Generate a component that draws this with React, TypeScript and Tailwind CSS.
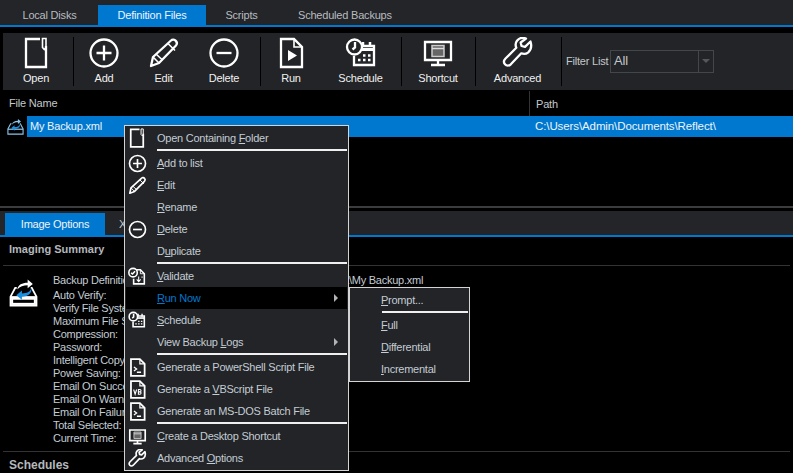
import type { ReactNode } from "react";

const FONT = "font-['Liberation_Sans',Arial,sans-serif]";

type IconProps = { size?: number };

function Svg({ size = 32, children }: IconProps & { children: ReactNode }) {
  return (
    <svg width={size} height={size} viewBox="0 0 32 32" fill="none" stroke="#fff" strokeWidth={size < 24 ? 2.8 : 2.3} className="block shrink-0">
      {children}
    </svg>
  );
}

const OpenIcon = (p: IconProps) => (
  <Svg {...p}>
    <path d="M20 2H6v28h20V9" />
    <path d="M22.500 1.500h3.500v9l-1.700 2-1.800-2z" strokeWidth="1.600" />
  </Svg>
);
const AddIcon = (p: IconProps) => (
  <Svg {...p}>
    <circle cx="16" cy="16" r="13.500" />
    <path d="M16 8.500v15M8.500 16h15" />
  </Svg>
);
const MinusIcon = (p: IconProps) => (
  <Svg {...p}>
    <circle cx="16" cy="16" r="13.500" />
    <path d="M8.500 16h15" />
  </Svg>
);
const PencilIcon = (p: IconProps) => (
  <Svg {...p}>
    <path d="M23 3.500c1.500-1.500 3.500-1 4.800.4 1.300 1.400 1.600 3 .2 4.600L11 26l-8 3 2-9z" strokeLinejoin="round" />
    <path d="M20 6.500l7 7M5 20l6 6M8 17l6.500 6" strokeWidth="1.600" />
  </Svg>
);
const RunIcon = (p: IconProps) => (
  <Svg {...p}>
    <path d="M6 2h13l8 8v20H6z" />
    <path d="M19 2v8h8" strokeWidth="1.600" />
    <path d="M13 13l9 5.500-9 5.500z" fill="#fff" stroke="none" />
  </Svg>
);
const ScheduleIcon = (p: IconProps) => (
  <Svg {...p}>
    <path d="M14 9h15v19H9v-9" />
    <path d="M18 5v5M25 5v5" strokeWidth="2.500" />
    <path d="M15 12.500h14" strokeWidth="3" />
    <path d="M13 23h2.500M18 23h2.500M23 23h2.500M18 18.500h2.500M23 18.500h2.500" strokeWidth="2.400" />
    <circle cx="9.500" cy="10" r="7.500" fill="#222427" />
    <path d="M10 5v5.500l-2.500 2" />
  </Svg>
);
const ShortcutIcon = (p: IconProps) => (
  <Svg {...p}>
    <path d="M3 5h26v18H3z" />
    <path d="M10 8.500h12v11H10z" fill="#666" stroke="#ccc" strokeWidth="1.500" />
    <path d="M10 11.500h12" stroke="#ddd" strokeWidth="1.500" />
    <path d="M16 23v4M9 28h14" />
  </Svg>
);
const WrenchIcon = (p: IconProps) => (
  <Svg {...p}>
    <path
      d="M28.500 4.500l-5.500 5.300-3.500-.8-.8-3.500 5.300-4c-3.500-1.200-7-.4-9 2.300-1.500 2-1.700 4.700-.7 7L3.500 21.500c-1.700 1.800-1.900 4.200-.5 5.800 1.500 1.700 4 1.700 5.800 0l10.500-11c2.400 1 5 .6 7-1 2.700-2.300 3.400-6.800 2.200-10.800z"
      strokeLinejoin="round"
    />
  </Svg>
);
const ValidateIcon = (p: IconProps) => (
  <Svg {...p}>
    <path d="M13 5h9l7 7v18H10v-9" />
    <path d="M22 5v7h7" strokeWidth="1.600" />
    <path d="M19 17v9M15.500 22l3.500 4 3.500-4M24 18h2" strokeWidth="1.800" />
    <circle cx="9" cy="10" r="7.500" fill="#222427" />
    <path d="M5.500 10.500l2.500 2 4.500-5" />
  </Svg>
);
const ScriptIcon = ({ size, glyph }: IconProps & { glyph: "ps" | "vb" }) => (
  <Svg size={size}>
    <path d="M5 2h15l8 8v20H5z" strokeWidth="3" />
    <path d="M20 2v8h8" strokeWidth="2" />
    {glyph === "ps" ? (
      <path d="M10 15l4.500 3.500L10 22M15 24h7" strokeWidth="2.200" />
    ) : (
      <path d="M9.500 16l2.500 8 2.500-8M17.500 16v8h2.500a2 2 0 0 0 0-4h-2.500 2.500a2 2 0 0 0 0-4z" strokeWidth="1.800" />
    )}
  </Svg>
);
// tray with the two swoosh arrows, solid lower band in the summary version
const BackupIcon = ({ size = 28, tray = "#fff", solid = true }: IconProps & { tray?: string; solid?: boolean }) => (
  <svg width={size} height={size} viewBox="0 0 28 28" fill="none" className="block shrink-0">
    <path d="M7.500 9.500H6L1.500 18v8.500h25V18L22 9.500h-1" stroke={tray} strokeWidth="1.800" />
    <path d="M1.500 18.500h25" stroke={tray} strokeWidth="2" />
    {solid && <path d="M2 19h24v7H2z" fill={tray} />}
    {solid && <path d="M4 21h20v3H4z" fill="#000" />}
    <path d="M8 11c.8-4.500 4.500-6.500 10-6.500V1.500l5 4.300-5 4.200V7c-4 0-7.500 1-10 4z" fill={tray} />
    <path d="M21.500 9.500c-.5 3.800-4 5.500-9 5.500v-3l-5.500 4.600 5.500 4.400v-3c6 0 10-3.300 9-8.500z" fill="#1a8fe0" />
  </svg>
);

function ToolButton({ icon, label, w }: { icon: ReactNode; label: string; w: string }) {
  return (
    <div className={`${w} flex flex-col items-center pt-[4px] text-[11px] leading-[16px] tracking-[-0.2px] text-[#f0f0f0]`}>
      <div className="flex h-[32px] items-center justify-center">{icon}</div>
      <span className="mt-[1px]">{label}</span>
    </div>
  );
}

const Sep = () => <div className="my-[4px] w-px shrink-0 self-stretch bg-black" />;

function Toolbar() {
  return (
    <div className="ml-[3px] mt-[6px] flex h-[57px] bg-[#222427]">
      <ToolButton w="w-[70px] pr-[4px]" label="Open" icon={<OpenIcon />} />
      <Sep />
      <ToolButton w="w-[60px]" label="Add" icon={<AddIcon />} />
      <ToolButton w="w-[59px]" label="Edit" icon={<PencilIcon />} />
      <ToolButton w="w-[62px]" label="Delete" icon={<MinusIcon />} />
      <div className="w-[5px]" />
      <Sep />
      <ToolButton w="w-[60px]" label="Run" icon={<RunIcon />} />
      <ToolButton w="w-[79px]" label="Schedule" icon={<ScheduleIcon />} />
      <div className="w-px" />
      <Sep />
      <ToolButton w="w-[72px]" label="Shortcut" icon={<ShortcutIcon />} />
      <div className="w-px" />
      <Sep />
      <ToolButton w="w-[85px] pr-[2px]" label="Advanced" icon={<WrenchIcon />} />
      <Sep />
      <div className="ml-[4px] flex items-center pb-[1px] text-[11px] tracking-[-0.2px] text-[#c4c8cc]">
        <span className="w-[44px] whitespace-nowrap">Filter List</span>
        <div className="flex h-[23px] w-[104px] border border-[#44474a] text-[#c4c8cc]">
          <span className="flex-1 pl-[3px] text-[13px] leading-[20px]">All</span>
          <div className="flex w-[15px] items-center justify-center border-l border-[#44474a]">
            <div className="h-0 w-0 border-x-[4px] border-t-[4px] border-x-transparent border-t-[#55585b]" />
          </div>
        </div>
      </div>
    </div>
  );
}

function FileList() {
  return (
    <div className="h-[116px] bg-black text-[11px] tracking-[-0.2px]">
      <div className="flex h-[26px] items-center text-[#c4c8cc]">
        <span className="w-[529px] pl-[9px] pt-[1px]">File Name</span>
        <span className="border-l border-[#333] pl-[6px] pt-[1px] leading-[24px]">Path</span>
      </div>
      <div className="flex h-[21px] items-center">
        <div className="flex w-[27px] justify-center pl-[4px]">
          <BackupIcon size={17} tray="#8cc4ea" solid={false} />
        </div>
        <div className="flex h-full flex-1 items-center bg-[#0078cf] text-[#eef4fa]">
          <span className="w-[508px] pl-[3px]">My Backup.xml</span>
          <span className="text-[11.5px] tracking-[-0.1px]">C:\Users\Admin\Documents\Reflect\</span>
        </div>
      </div>
    </div>
  );
}

const SUMMARY = [
  "Auto Verify:",
  "Verify File System:",
  "Maximum File Size:",
  "Compression:",
  "Password:",
  "Intelligent Copy:",
  "Power Saving:",
  "Email On Success:",
  "Email On Warning:",
  "Email On Failure:",
  "Total Selected:",
  "Current Time:",
];

function LowerPanel() {
  return (
    <div className="flex-1 overflow-hidden bg-black text-[11px] tracking-[-0.25px] text-[#c4ccd4]">
      <div className="h-[2px] bg-[#3a3c3e]" />
      <div className="mt-[3px] h-[26px] border-b-[2px] border-[#0078cf] bg-[#232528] pt-[2px]">
        <div className="flex items-center">
          <div className="ml-[5px] flex h-[22px] w-[100px] items-center justify-center bg-[#0078cf] text-[#eef4fa]">Image Options</div>
          <span className="ml-[14px]">X</span>
        </div>
      </div>
      <div className="mx-[3px] h-[29px] border-b border-[#333] pl-[6px] pt-[4px] font-bold tracking-normal text-[#b4b8bc]">Imaging Summary</div>
      <div className="mx-[3px] flex h-[186px] border-b border-[#333] pl-[6px] pt-[8px]">
        <div className="w-[44px] pt-[4px]">
          <BackupIcon size={29} />
        </div>
        <div className="leading-[13px]">
          <div className="mb-[2px] flex whitespace-nowrap">
            <span className="w-[131px]">Backup Definition File:</span>
            <span>C:\Users\Admin\Documents\Reflect\My Backup.xml</span>
          </div>
          {SUMMARY.map((s) => (
            <div key={s}>{s}</div>
          ))}
        </div>
      </div>
      <div className="pl-[9px] pt-[6px] text-[12px] font-bold leading-[14px] tracking-normal text-[#b4b8bc]">Schedules</div>
    </div>
  );
}

function MenuItem({ icon, children, active, arrow }: { icon?: ReactNode; children: ReactNode; active?: boolean; arrow?: boolean }) {
  return (
    <div className={`flex h-[22px] items-center whitespace-nowrap ${active ? "bg-black text-[#0078cf]" : "text-[#c4ccd4]"}`}>
      <div className="mr-[9px] flex w-[22px] justify-center">{icon}</div>
      <span className="flex-1 pt-[1px]">{children}</span>
      {arrow && <div className="mr-[9px] h-0 w-0 border-y-[4px] border-l-[4px] border-y-transparent border-l-[#b0b4b8]" />}
    </div>
  );
}

const MenuSep = () => <div className="ml-[31px] h-[3px] border-t-2 border-[#f0f0f0]" />;

function ContextMenu() {
  return (
    <div className="absolute left-[124px] top-[125px] w-[225px] border border-[#d4d4d4] bg-[#222427] p-px text-[11px] tracking-[-0.25px]">
      <MenuItem icon={<OpenIcon size={20} />}>Open Containing <u>F</u>older</MenuItem>
      <MenuSep />
      <MenuItem icon={<AddIcon size={19} />}><u>A</u>dd to list</MenuItem>
      <MenuItem icon={<PencilIcon size={19} />}><u>E</u>dit</MenuItem>
      <MenuItem><u>R</u>ename</MenuItem>
      <MenuItem icon={<MinusIcon size={19} />}><u>D</u>elete</MenuItem>
      <MenuItem>D<u>u</u>plicate</MenuItem>
      <MenuSep />
      <MenuItem icon={<ValidateIcon size={18} />}><u>V</u>alidate</MenuItem>
      <MenuItem active arrow><u>R</u>un Now</MenuItem>
      <MenuItem icon={<ScheduleIcon size={18} />}><u>S</u>chedule</MenuItem>
      <MenuItem arrow>View Backup <u>L</u>ogs</MenuItem>
      <MenuSep />
      <MenuItem icon={<ScriptIcon size={19} glyph="ps" />}>Generate a PowerShell Script File</MenuItem>
      <MenuItem icon={<ScriptIcon size={19} glyph="vb" />}>Generate a <u>V</u>BScript File</MenuItem>
      <MenuItem icon={<ScriptIcon size={19} glyph="ps" />}>Generate an MS-DOS Batch File</MenuItem>
      <MenuSep />
      <MenuItem icon={<ShortcutIcon size={19} />}><u>C</u>reate a Desktop Shortcut</MenuItem>
      <MenuItem icon={<WrenchIcon size={19} />}>Advanced <u>O</u>ptions</MenuItem>
    </div>
  );
}

function MenuItemSub({ children }: { children: ReactNode }) {
  return <div className="flex h-[22px] items-center pl-[30px] pt-[1px] text-[#c4ccd4]">{children}</div>;
}

function SubMenu() {
  return (
    <div className="absolute left-[349px] top-[287px] w-[121px] border border-[#d4d4d4] bg-[#222427] p-px text-[11px] tracking-[-0.25px]">
      <MenuItemSub><u>P</u>rompt...</MenuItemSub>
      <MenuSep />
      <MenuItemSub><u>F</u>ull</MenuItemSub>
      <MenuItemSub><u>D</u>ifferential</MenuItemSub>
      <MenuItemSub><u>I</u>ncremental</MenuItemSub>
    </div>
  );
}

export default function App() {
  return (
    <div className={`relative flex h-[473px] w-[793px] flex-col overflow-hidden bg-black ${FONT}`}>
      <div className="h-[27px] border-b-[2px] border-[#0078cf] bg-[#232528] pl-[1px] pt-[5px] text-[11px] tracking-[-0.2px] text-[#b8bcc0]">
        <div className="flex h-[20px] items-center">
          <span className="w-[97px] text-center">Local Disks</span>
          <span className="flex h-full w-[108px] items-center justify-center bg-[#0078cf] text-[#eef4fa]">Definition Files</span>
          <span className="w-[71px] text-center">Scripts</span>
          <span className="ml-[21px] whitespace-nowrap">Scheduled Backups</span>
        </div>
      </div>
      <Toolbar />
      <FileList />
      <LowerPanel />
      <ContextMenu />
      <SubMenu />
    </div>
  );
}
